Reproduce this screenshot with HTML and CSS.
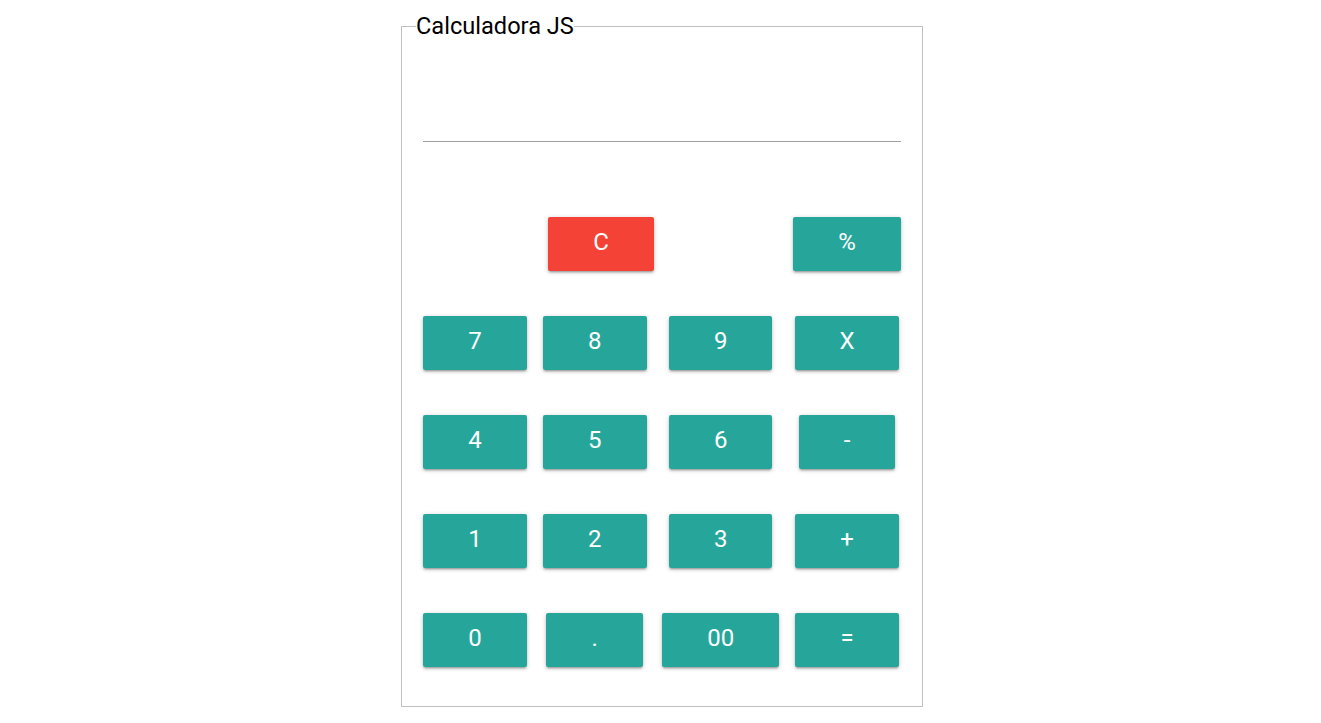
FILE: index.html
```html
<!DOCTYPE html>
<html lang="pt">
<head>
<meta charset="utf-8">
<title>Calculadora JS</title>
<link rel="stylesheet" href="styles.css">
</head>
<body>
  <fieldset class="calc">
    <legend class="calc-title">Calculadora JS</legend>
    <input class="calc-display" type="text" aria-label="Resultado">
    <div class="keypad">
      <div class="keypad-top">
        <button class="key key-clear">C</button>
        <button class="key key-percent">%</button>
      </div>
      <div class="keypad-grid">
        <button class="key">7</button>
        <button class="key">8</button>
        <button class="key key-w103">9</button>
        <button class="key">X</button>

        <button class="key">4</button>
        <button class="key">5</button>
        <button class="key key-w103">6</button>
        <button class="key key-w96">-</button>

        <button class="key">1</button>
        <button class="key">2</button>
        <button class="key key-w103">3</button>
        <button class="key">+</button>

        <button class="key">0</button>
        <button class="key key-w97">.</button>
        <button class="key key-w117">00</button>
        <button class="key">=</button>
      </div>
    </div>
  </fieldset>
</body>
</html>
```
FILE: styles.css
```css
* {
  box-sizing: border-box;
}

html, body {
  margin: 0;
  padding: 0;
  background: #ffffff;
}

body {
  font-family: Roboto, "Liberation Sans", sans-serif;
  color: #000;
}

.calc {
  width: 522px;
  margin: 12px 0 0 calc(50% - 259.5px);
  padding: 0 21px 39px 21px;
  border: 1px solid #c0c0c0;
  min-inline-size: 0;
}

.calc-title {
  margin-left: -7px;
  padding: 0;
  font-size: 23.6px;
  line-height: 28px;
  color: #000;
}

.calc-display {
  display: block;
  width: 100%;
  height: 46px;
  margin: 56px 0 0;
  padding: 0;
  border: none;
  border-bottom: 1px solid #9e9e9e;
  outline: none;
  background: transparent;
  font-family: inherit;
  font-size: 24px;
}

.keypad {
  display: flex;
  flex-direction: column;
  gap: 45px;
  margin-top: 75px;
}

.keypad-top {
  display: grid;
  grid-template-columns: 125px 106px 139px 108px;
}

.keypad-grid {
  display: grid;
  width: 476px;
  grid-template-columns: 104px 104px 117px 104px;
  justify-content: space-between;
  justify-items: center;
  row-gap: 45px;
}

.key {
  width: 104px;
  height: 54px;
  padding: 0 0 3px;
  border: none;
  border-radius: 2px;
  background: #26a69a;
  color: #fff;
  font-family: inherit;
  font-size: 24px;
  line-height: 51px;
  text-align: center;
  cursor: pointer;
  box-shadow: 0 2px 2px 0 rgba(0, 0, 0, 0.14),
              0 3px 1px -2px rgba(0, 0, 0, 0.12),
              0 1px 5px 0 rgba(0, 0, 0, 0.2);
}

.key-clear {
  grid-column: 2;
  width: 106px;
  background: #f44336;
}

.key-percent {
  grid-column: 4;
  width: 108px;
}

.key-w103 { width: 103px; }
.key-w96  { width: 96px; }
.key-w97  { width: 97px; }
.key-w117 { width: 117px; }
```
